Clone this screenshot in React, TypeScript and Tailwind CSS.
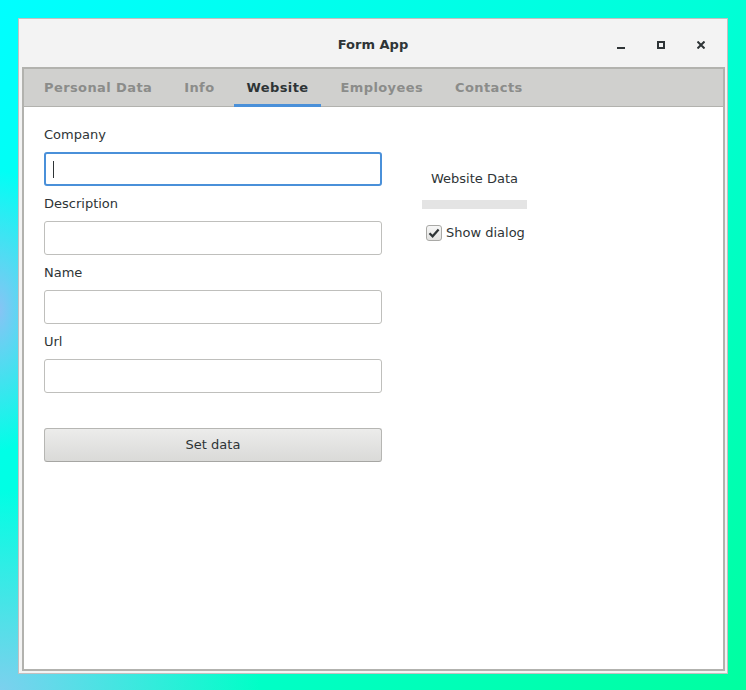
import React from 'react';

const tabs = ['Personal Data', 'Info', 'Website', 'Employees', 'Contacts'];
const fields = ['Company', 'Description', 'Name', 'Url'];

const App: React.FC = () => {
  return (
    <div
      className="w-[746px] h-[690px] pt-[18px] pl-[18px] bg-[radial-gradient(ellipse_60px_140px_at_0%_45%,#86c4f4,transparent),radial-gradient(ellipse_260px_200px_at_0%_100%,#7cd0ee,transparent),linear-gradient(135deg,#00ffff_0%,#00ffd8_50%,#00ffa0_100%)]"
      style={{ fontFamily: '"DejaVu Sans", sans-serif' }}
    >
      <div className="w-[710px] h-[656px] flex flex-col bg-[#f3f3f3] border border-[#c4bfbf]">
        {/* title bar */}
        <div className="h-[48px] pt-[3px] grid grid-cols-[1fr_auto_1fr] items-center">
          <div />
          <div className="text-[13px] font-bold text-[#2e3436]">Form App</div>
          <div className="flex justify-end pr-[6px]">
            <button className="w-[40px] h-[40px] flex items-center justify-center">
              <span className="block w-[8px] h-[2px] mt-[6px] bg-[#2e3436]" />
            </button>
            <button className="w-[40px] h-[40px] flex items-center justify-center">
              <span className="block w-[8px] h-[8px] border-2 border-[#2e3436]" />
            </button>
            <button className="w-[40px] h-[40px] flex items-center justify-center">
              <svg width="8" height="8" viewBox="0 0 8 8">
                <path d="M0.5 0.5L7.5 7.5M7.5 0.5L0.5 7.5" stroke="#2e3436" strokeWidth="2" />
              </svg>
            </button>
          </div>
        </div>

        {/* notebook frame */}
        <div className="flex-1 flex flex-col ml-[3px] mr-[2px] mb-[2px] border-2 border-[#b2b2ae] bg-white">
          <div className="h-[38px] flex gap-2 pl-2 bg-[#d0d0ce] border-b border-[#b2b2ae]">
            {tabs.map((t) => (
              <div
                key={t}
                className={
                  t === 'Website'
                    ? 'px-3 flex items-center -mb-px pt-[3px] border-b-[3px] border-[#4a90d9] text-[13px] tracking-[0.4px] font-bold text-[#2e3436]'
                    : 'px-3 flex items-center text-[13px] tracking-[0.4px] font-bold text-[#8b8c8a]'
                }
              >
                {t}
              </div>
            ))}
          </div>

          <div className="flex-1 flex gap-10 pl-5 pt-[19px] text-[13px] text-[#2e3436]">
            <div className="w-[338px] flex flex-col">
              {fields.map((f, i) => (
                <div key={f} className="flex flex-col">
                  <div className="leading-[17px] mb-[9px]">{f}</div>
                  <div
                    className={
                      i === 0
                        ? 'h-[34px] mb-[9px] rounded-[3px] border-2 border-[#4a90d9] flex items-center pl-[7px]'
                        : 'h-[34px] mb-[9px] rounded-[3px] border border-[#bfbfbc]'
                    }
                  >
                    {i === 0 && <span className="block w-px h-[17px] bg-[#2e3436]" />}
                  </div>
                </div>
              ))}
              <button className="mt-[26px] h-[34px] rounded-[3px] border border-[#b6b6b3] border-b-[#a6a6a3] bg-gradient-to-b from-[#ececeb] to-[#dadad8] text-[13px] text-[#2e3436]">
                Set data
              </button>
            </div>

            <div className="w-[105px] flex flex-col items-center pt-[44px]">
              <div className="leading-[17px]">Website Data</div>
              <div className="w-[105px] h-[9px] mt-[13px] bg-[#e4e4e4]" />
              <div className="self-start flex items-center gap-1 mt-[15px] ml-[4px]">
                <span className="w-[16px] h-[16px] rounded-[3px] border border-[#a9a9a6] bg-gradient-to-b from-[#f6f6f6] to-[#e2e2e0] flex items-center justify-center">
                  <svg width="12" height="12" viewBox="0 0 12 12">
                    <path d="M1.5 6.2L4.6 9.3L10.6 2.6" fill="none" stroke="#2e3436" strokeWidth="2.2" />
                  </svg>
                </span>
                <span className="leading-[17px]">Show dialog</span>
              </div>
            </div>
          </div>
        </div>
      </div>
    </div>
  );
};

export default App;
